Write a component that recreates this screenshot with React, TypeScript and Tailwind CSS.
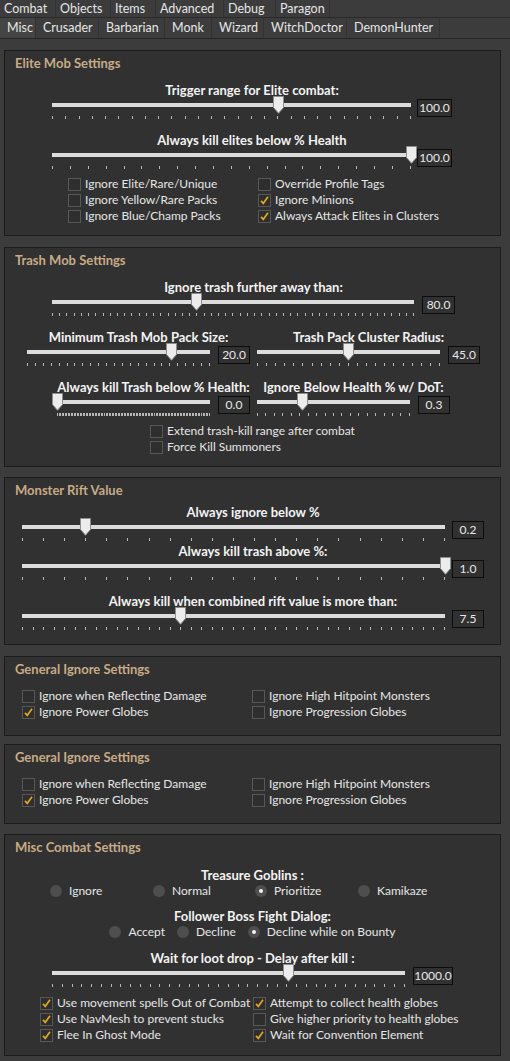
import React from "react";

const tabs1 = [
  { name: "Combat", w: "w-[56px]" },
  { name: "Objects", w: "w-[55px]" },
  { name: "Items", w: "w-[45px]" },
  { name: "Advanced", w: "w-[68px]" },
  { name: "Debug", w: "w-[52px]" },
  { name: "Paragon", w: "w-[54px]" },
];

const tabs2 = [
  { name: "Misc", w: "w-[36px] pl-[3px] bg-[#444444]" },
  { name: "Crusader", w: "w-[63px]" },
  { name: "Barbarian", w: "w-[66px]" },
  { name: "Monk", w: "w-[47px]" },
  { name: "Wizard", w: "w-[52px]" },
  { name: "WitchDoctor", w: "w-[83px]" },
  { name: "DemonHunter", w: "w-[93px]" },
];

function Thumb() {
  return (
    <svg width="11" height="18" viewBox="0 0 11 18" className="block">
      <path d="M0.5 0.5H10.5V11.5L5.5 17.3L0.5 11.5Z" fill="#ececec" stroke="#8d8d8d" />
    </svg>
  );
}

function Ticks({ count }: { count: number }) {
  return (
    <div className="absolute left-0 right-0 top-[18px] flex h-[3px] justify-between">
      {Array.from({ length: count + 1 }).map((_, i) => (
        <span key={i} className="h-full w-px bg-[#b9b9b9]" />
      ))}
    </div>
  );
}

interface SliderProps {
  label: string;
  value: string;
  pos: number;
  ticks: number;
  className?: string;
  boxCls: string;
  gapCls: string;
}

function Slider({ label, value, pos, ticks, className = "", boxCls, gapCls }: SliderProps) {
  return (
    <div className={className}>
      <div className="whitespace-nowrap text-center text-[13px] font-bold leading-[16px] text-[#f3f3f3]">{label}</div>
      <div className={`flex items-start ${gapCls}`}>
        <div className="relative h-[22px] flex-1">
          <div className="absolute left-0 right-0 top-[5px] h-[4px] bg-[#dcdcdc]" />
          <Ticks count={ticks} />
          <div className="absolute top-[-2px]" style={{ left: `calc(${pos * 100}% - 5.5px)` }}>
            <Thumb />
          </div>
        </div>
        <div
          className={`mt-[1px] flex h-[18px] items-center justify-center border border-[#0c0c0c] text-[#e8e8e8] ${boxCls}`}
        >
          {value}
        </div>
      </div>
    </div>
  );
}

function Check({ label, checked = false }: { label: string; checked?: boolean }) {
  return (
    <div className="flex h-[16px] items-center gap-[4px] whitespace-nowrap">
      <span className="flex h-[13px] w-[13px] shrink-0 items-center justify-center border border-[#585858] bg-[#2e2e2e]">
        {checked && (
          <svg width="11" height="11" viewBox="0 0 11 11">
            <path d="M2 5.8L4.3 8.3L9 1.8" stroke="#e2a524" strokeWidth="1.7" fill="none" />
          </svg>
        )}
      </span>
      <span>{label}</span>
    </div>
  );
}

function Radio({ label, checked = false, className = "" }: { label: string; checked?: boolean; className?: string }) {
  return (
    <div className={`flex h-[16px] items-center gap-[7px] whitespace-nowrap ${className}`}>
      <span className="flex h-[12px] w-[12px] shrink-0 items-center justify-center rounded-full bg-[#4e4e4e]">
        {checked && <span className="h-[4px] w-[4px] rounded-full bg-[#f2f2f2]" />}
      </span>
      <span>{label}</span>
    </div>
  );
}

function Panel({ title, className, children }: { title: string; className: string; children: React.ReactNode }) {
  return (
    <div className={`ml-[4px] w-[497px] border border-[#1c1c1c] bg-[#313131] ${className}`}>
      <div className="pl-[10px] pt-[4px] text-[13px] font-bold leading-[16px] text-[#c7ab87]">{title}</div>
      {children}
    </div>
  );
}

function IgnoreSettings({ className }: { className: string }) {
  return (
    <Panel title="General Ignore Settings" className={className}>
      <div className="ml-[17px] mt-[11px] grid grid-cols-[230px_1fr]">
        <Check label="Ignore when Reflecting Damage" />
        <Check label="Ignore High Hitpoint Monsters" />
        <Check label="Ignore Power Globes" checked />
        <Check label="Ignore Progression Globes" />
      </div>
    </Panel>
  );
}

export default function App() {
  return (
    <div className="h-[1061px] w-[510px] overflow-hidden bg-[#3c3c3c] font-['Lato',sans-serif] text-[12px] text-[#e6e6e6]">
      {/* Top tabs */}
      <div className="flex h-[18px] border-b border-[#2a2a2a] text-[12.5px]">
        {tabs1.map((t) => (
          <div key={t.name} className={`${t.w} border-r border-[#333333] pl-[4px] leading-[17px]`}>
            {t.name}
          </div>
        ))}
      </div>
      {/* Class tabs */}
      <div className="flex h-[21px] border-b border-[#262626] text-[12.5px]">
        {tabs2.map((t) => (
          <div key={t.name} className={`${t.w} border-r border-[#333333] pl-[7px] leading-[20px]`}>
            {t.name}
          </div>
        ))}
      </div>

      <Panel title="Elite Mob Settings" className="mt-[11px] h-[186px]">
        <Slider
          className="ml-[47px] mt-[11px] w-[400px]"
          label="Trigger range for Elite combat:"
          value="100.0"
          pos={0.63}
          ticks={27}
          boxCls="w-[35px]"
          gapCls="gap-[6px]"
        />
        <Slider
          className="ml-[47px] mt-[12px] w-[400px]"
          label="Always kill elites below % Health"
          value="100.0"
          pos={1}
          ticks={20}
          boxCls="w-[35px]"
          gapCls="gap-[6px]"
        />
        <div className="ml-[63px] mt-[6px] grid grid-cols-[190px_1fr]">
          <Check label="Ignore Elite/Rare/Unique" />
          <Check label="Override Profile Tags" />
          <Check label="Ignore Yellow/Rare Packs" />
          <Check label="Ignore Minions" checked />
          <Check label="Ignore Blue/Champ Packs" />
          <Check label="Always Attack Elites in Clusters" checked />
        </div>
      </Panel>

      <Panel title="Trash Mob Settings" className="mt-[11px] h-[220px]">
        <Slider
          className="ml-[47px] mt-[11px] w-[403px]"
          label="Ignore trash further away than:"
          value="80.0"
          pos={0.4}
          ticks={50}
          boxCls="w-[33px]"
          gapCls="gap-[8px]"
        />
        <div className="ml-[22px] mt-[12px] flex gap-[7px]">
          <Slider
            className="w-[223px]"
            label="Minimum Trash Mob Pack Size:"
            value="20.0"
            pos={0.79}
            ticks={23}
            boxCls="w-[32px]"
            gapCls="gap-[8px]"
          />
          <Slider
            className="w-[223px]"
            label="Trash Pack Cluster Radius:"
            value="45.0"
            pos={0.5}
            ticks={20}
            boxCls="w-[32px]"
            gapCls="gap-[8px]"
          />
        </div>
        <div className="ml-[52px] mt-[12px] flex gap-[7px]">
          <Slider
            className="w-[193px]"
            label="Always kill Trash below % Health:"
            value="0.0"
            pos={0}
            ticks={100}
            boxCls="w-[32px]"
            gapCls="gap-[8px]"
          />
          <Slider
            className="w-[193px]"
            label="Ignore Below Health % w/ DoT:"
            value="0.3"
            pos={0.3}
            ticks={18}
            boxCls="w-[32px]"
            gapCls="gap-[8px]"
          />
        </div>
        <div className="ml-[145px] mt-[6px]">
          <Check label="Extend trash-kill range after combat" />
          <Check label="Force Kill Summoners" />
        </div>
      </Panel>

      <Panel title="Monster Rift Value" className="mt-[10px] h-[168px]">
        <Slider
          className="ml-[17px] mt-[6px] w-[462px]"
          label="Always ignore below %"
          value="0.2"
          pos={0.15}
          ticks={20}
          boxCls="w-[32px]"
          gapCls="gap-[7px]"
        />
        <Slider
          className="ml-[17px] mt-[1px] w-[462px]"
          label="Always kill trash above %:"
          value="1.0"
          pos={1}
          ticks={20}
          boxCls="w-[32px]"
          gapCls="gap-[7px]"
        />
        <Slider
          className="ml-[17px] mt-[12px] w-[462px]"
          label="Always kill when combined rift value is more than:"
          value="7.5"
          pos={0.375}
          ticks={40}
          boxCls="w-[32px]"
          gapCls="gap-[7px]"
        />
      </Panel>

      <IgnoreSettings className="mt-[11px] h-[80px]" />
      <IgnoreSettings className="mt-[8px] h-[80px]" />

      <Panel title="Misc Combat Settings" className="mt-[10px] h-[222px]">
        <div className="mt-[12px] text-center text-[13px] font-bold leading-[16px] text-[#f3f3f3]">Treasure Goblins :</div>
        <div className="ml-[45px] flex">
          <Radio className="w-[103px]" label="Ignore" />
          <Radio className="w-[102px]" label="Normal" />
          <Radio className="w-[103px]" label="Prioritize" checked />
          <Radio className="w-[103px]" label="Kamikaze" />
        </div>
        <div className="mt-[9px] text-center text-[13px] font-bold leading-[16px] text-[#f3f3f3]">
          Follower Boss Fight Dialog:
        </div>
        <div className="flex justify-center gap-[12px]">
          <Radio label="Accept" />
          <Radio label="Decline" />
          <Radio label="Decline while on Bounty" checked />
        </div>
        <Slider
          className="ml-[47px] mt-[10px] w-[401px]"
          label="Wait for loot drop - Delay after kill :"
          value="1000.0"
          pos={0.67}
          ticks={36}
          boxCls="w-[40px]"
          gapCls="gap-[8px]"
        />
        <div className="ml-[35px] mt-[7px] grid grid-cols-[213px_1fr]">
          <Check label="Use movement spells Out of Combat" checked />
          <Check label="Attempt to collect health globes" checked />
          <Check label="Use NavMesh to prevent stucks" checked />
          <Check label="Give higher priority to health globes" />
          <Check label="Flee In Ghost Mode" checked />
          <Check label="Wait for Convention Element" checked />
        </div>
      </Panel>
    </div>
  );
}
